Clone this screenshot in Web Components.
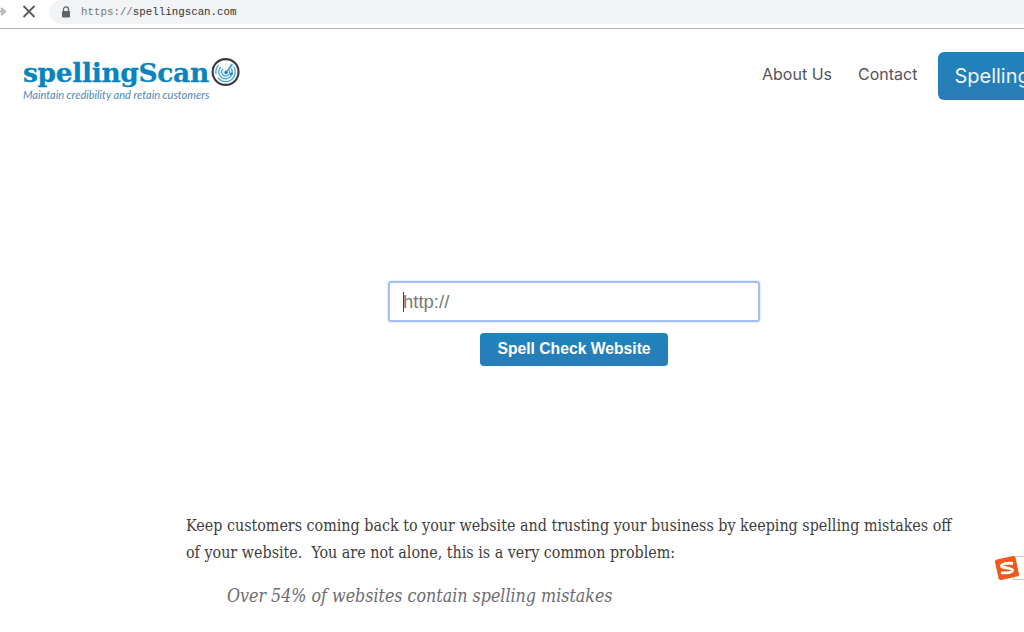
<!DOCTYPE html>
<html>
<head>
<meta charset="utf-8">
<title>spellingScan</title>
<style>
	html, body {
		margin: 0;
		padding: 0;
		width: 1024px;
		height: 632px;
		overflow: hidden;
		background: #fff;
	}
</style>
</head>
<body>
<browser-bar url-scheme="https://" url-host="spellingscan.com"></browser-bar>
<site-header>
	<site-logo slot="logo"></site-logo>
	<nav-link>About Us</nav-link>
	<nav-link>Contact</nav-link>
	<nav-button>Spelling</nav-button>
</site-header>
<check-form placeholder="http://" action="Spell Check Website"></check-form>
<intro-text>
	Keep customers coming back to your website and trusting your business by keeping spelling mistakes off<br>
	of your website.&nbsp; You are not alone, this is a very common problem:
	<span slot="quote">Over 54% of websites contain spelling mistakes</span>
</intro-text>
<ime-badge></ime-badge>

<script>
class browserBar extends HTMLElement {
	constructor() {
		super();
		this.shadowDOM = this.attachShadow({ mode: "open" });
	}

	connectedCallback() {
		const scheme = this.getAttribute("url-scheme");
		const host = this.getAttribute("url-host");
		this.shadowDOM.innerHTML = `
		<style>
			:host {
				display: flex;
				align-items: flex-start;
				height: 28px;
				border-bottom: 1px solid #b9b9b9;
				background: #fff;
			}

			.back {
				width: 22px;
				height: 24px;
				flex: none;
				overflow: hidden;
			}

			.close {
				width: 27px;
				height: 24px;
				flex: none;
			}

			.pill {
				flex: 1;
				height: 24px;
				display: flex;
				align-items: center;
				gap: 10px;
				padding-left: 12px;
				background: #f1f3f4;
				border-radius: 12px 0 0 12px;
			}

			.url {
				font: 10.8px "Liberation Mono", monospace;
				color: #333;
				white-space: pre;
			}

			.url span {
				color: #777;
			}
		</style>
		<div class="back">
			<svg width="22" height="24" viewBox="0 0 22 24">
				<path d="M-2 11.5h5M1 8l4 3.5L1 15" fill="none" stroke="#b5b5b5" stroke-width="2"/>
			</svg>
		</div>
		<div class="close">
			<svg width="27" height="24" viewBox="0 0 27 24">
				<path d="M1.5 6l11 11M12.500 6l-11 11" fill="none" stroke="#5a5a5a" stroke-width="1.8"/>
			</svg>
		</div>
		<div class="pill">
			<svg width="10" height="12" viewBox="0 0 10 12">
				<path d="M2.5 5V3.400a2.500 2.500 0 0 1 5 0V5" fill="none" stroke="#5f6368" stroke-width="1.3"/>
				<rect x="1" y="5" width="8" height="6.5" rx="1" fill="#5f6368"/>
			</svg>
			<div class="url"><span>${scheme}</span>${host}</div>
		</div>
		`;
	}
}

class siteHeader extends HTMLElement {
	constructor() {
		super();
		this.shadowDOM = this.attachShadow({ mode: "open" });
	}

	connectedCallback() {
		this.shadowDOM.innerHTML = `
		<style>
			:host {
				display: flex;
				align-items: center;
				height: 48px;
				padding: 23px 0 0 23px;
			}

			.nav {
				margin-left: 522px;
				display: flex;
				align-items: center;
				gap: 26px;
			}

			::slotted(nav-button) {
				margin-left: -5px;
			}
		</style>
		<slot name="logo"></slot>
		<div class="nav"><slot></slot></div>
		`;
	}
}

class siteLogo extends HTMLElement {
	constructor() {
		super();
		this.shadowDOM = this.attachShadow({ mode: "open" });
	}

	connectedCallback() {
		this.shadowDOM.innerHTML = `
		<style>
			:host {
				display: block;
				flex: none;
				width: 217px;
				margin-top: 6px;
			}

			.top {
				display: flex;
				align-items: center;
				gap: 2px;
				height: 30px;
			}

			.name {
				font: bold 26.5px "DejaVu Serif", serif;
				letter-spacing: -0.35px;
				-webkit-text-stroke: 0.3px #0a84bd;
				color: #0a84bd;
			}

			.tag {
				font: italic 11px Lato, sans-serif;
				color: #4d87b5;
				margin-top: 1px;
				white-space: nowrap;
			}
		</style>
		<div class="top">
			<div class="name">spellingScan</div>
			<svg width="30" height="30" viewBox="0 0 30 30">
				<circle cx="15" cy="15" r="13.300" fill="#fff" stroke="#3a3a3a" stroke-width="2.200"/>
				<path d="M15 3v24M3 15h24" stroke="#c6ced3" stroke-width="0.7" stroke-dasharray="1.500 1.500"/>
				<g fill="none" stroke="#35a4e0" stroke-width="1.300">
					<path d="M23.700 10A10 10 0 1 1 7.900 7.900" stroke-dasharray="30 4"/>
					<path d="M21 11.500A7 7 0 1 1 10 10"/>
					<path d="M18.500 13A4 4 0 1 1 12.500 12"/>
				</g>
				<path d="M15.500 15.500L22 7" stroke="#2a8fc8" stroke-width="1.300"/>
				<path d="M15.500 15.500L20 5.500l4 3.500z" fill="#35a4e0" opacity=".3"/>
				<circle cx="15.500" cy="15.500" r="1.800" fill="#1b7fb8"/>
				<circle cx="21" cy="17" r="1.400" fill="#1b7fb8"/>
			</svg>
		</div>
		<div class="tag">Maintain credibility and retain customers</div>
		`;
	}
}

class navLink extends HTMLElement {
	constructor() {
		super();
		this.shadowDOM = this.attachShadow({ mode: "open" });
	}

	connectedCallback() {
		this.shadowDOM.innerHTML = `
		<style>
			:host {
				display: block;
				padding-bottom: 4px;
				font: 16px Inter, sans-serif;
				color: #54535c;
				white-space: nowrap;
			}
		</style>
		<slot></slot>
		`;
	}
}

class navButton extends HTMLElement {
	constructor() {
		super();
		this.shadowDOM = this.attachShadow({ mode: "open" });
	}

	connectedCallback() {
		this.shadowDOM.innerHTML = `
		<style>
			:host {
				display: block;
				flex: none;
				width: 180px;
				height: 48px;
				box-sizing: border-box;
				padding-left: 16px;
				border-radius: 6px;
				background: linear-gradient(#1e84bb, #2a7cb8);
				color: #eef6fb;
				font: 20px/48px Inter, sans-serif;
				white-space: nowrap;
			}
		</style>
		<slot></slot>
		`;
	}
}

class checkForm extends HTMLElement {
	constructor() {
		super();
		this.shadowDOM = this.attachShadow({ mode: "open" });
	}

	connectedCallback() {
		const placeholder = this.getAttribute("placeholder");
		const action = this.getAttribute("action");
		this.shadowDOM.innerHTML = `
		<style>
			:host {
				display: flex;
				flex-direction: column;
				align-items: center;
				gap: 11px;
				width: 372px;
				margin: 181px 0 0 388px;
			}

			.field {
				width: 100%;
				height: 41px;
				box-sizing: border-box;
				display: flex;
				align-items: center;
				padding-left: 13px;
				border: 2px solid #a3c0f4;
				border-radius: 3px;
				box-shadow: 0 0 2px #a3c0f4;
				font: 18.5px "Liberation Sans", sans-serif;
				color: #787878;
			}

			.caret {
				width: 1px;
				height: 20px;
				background: #444;
				margin-right: -1px;
			}

			.go {
				width: 188px;
				height: 33px;
				border-radius: 4px;
				background: linear-gradient(#1e84bb, #2a7cb8);
				color: #fff;
				font: bold 15.7px/31px "Liberation Sans", sans-serif;
				text-align: center;
			}
		</style>
		<div class="field"><span class="caret"></span>${placeholder}</div>
		<div class="go">${action}</div>
		`;
	}
}

class introText extends HTMLElement {
	constructor() {
		super();
		this.shadowDOM = this.attachShadow({ mode: "open" });
	}

	connectedCallback() {
		this.shadowDOM.innerHTML = `
		<style>
			:host {
				display: block;
				margin: 146px 0 0 186px;
				font: 15.92px/27px "DejaVu Serif Condensed", "DejaVu Serif", serif;
				font-stretch: condensed;
				color: #3d3d3d;
				white-space: nowrap;
			}

			.quote {
				margin: 17px 0 0 41px;
				font: italic 17.7px/27px "DejaVu Serif Condensed", "DejaVu Serif", serif;
				font-stretch: condensed;
				color: #6c6c72;
			}
		</style>
		<div><slot></slot></div>
		<div class="quote"><slot name="quote"></slot></div>
		`;
	}
}

class imeBadge extends HTMLElement {
	constructor() {
		super();
		this.shadowDOM = this.attachShadow({ mode: "open" });
	}

	connectedCallback() {
		this.shadowDOM.innerHTML = `
		<style>
			:host {
				position: absolute;
				left: 993px;
				top: 554px;
				width: 31px;
				height: 28px;
			}

			.tab {
				position: absolute;
				left: 20px;
				top: 2px;
				width: 11px;
				height: 24px;
				box-sizing: border-box;
				border: 1px solid #c9c9c9;
				border-right: 0;
			}

			svg {
				position: absolute;
				left: 0;
				top: 0;
			}
		</style>
		<div class="tab"></div>
		<svg width="29" height="28" viewBox="0 0 29 28">
			<rect x="3.500" y="3.500" width="21" height="21" rx="2.500" fill="#f25a1d" transform="rotate(-12 14 14)"/>
			<path d="M20 9.500C15 8.800 9 9.500 8.500 12c-.4 2 10.500 1.600 11 4 .4 2.400-6 3.400-11.500 2.700" fill="none" stroke="#fff" stroke-width="2.800"/>
		</svg>
		`;
	}
}

customElements.define("browser-bar", browserBar);
customElements.define("site-header", siteHeader);
customElements.define("site-logo", siteLogo);
customElements.define("nav-link", navLink);
customElements.define("nav-button", navButton);
customElements.define("check-form", checkForm);
customElements.define("intro-text", introText);
customElements.define("ime-badge", imeBadge);
</script>
</body>
</html>
